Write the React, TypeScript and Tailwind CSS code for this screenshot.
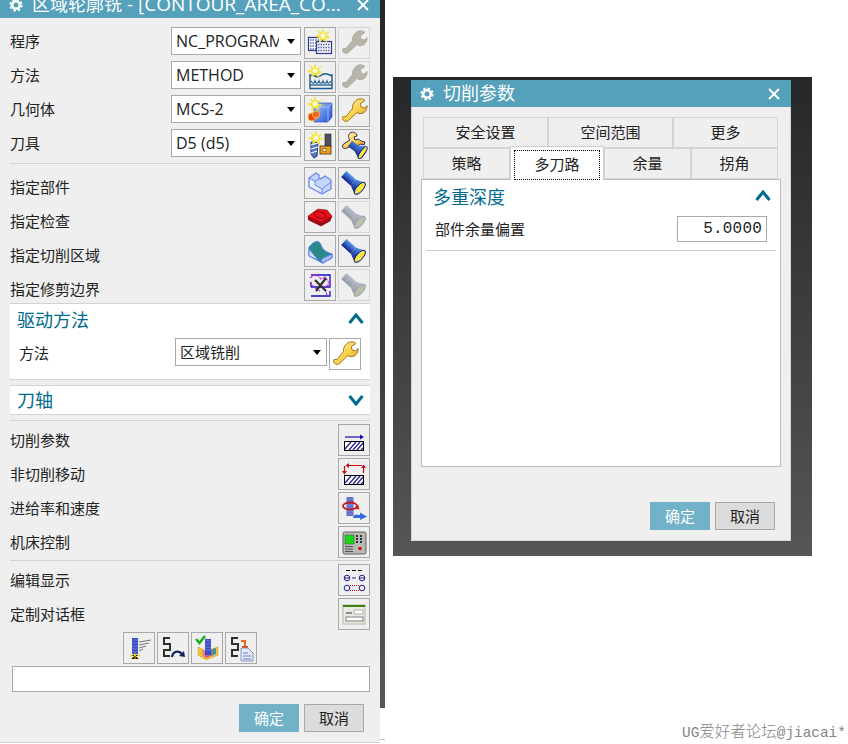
import type { ReactNode } from 'react'

const Grads = () => (
  <svg width="0" height="0" className="absolute">
    <defs>
      <linearGradient id="gold" x1="0" y1="0" x2="1" y2="1">
        <stop offset="0" stopColor="#fff6b0" />
        <stop offset="0.55" stopColor="#fbd04a" />
        <stop offset="1" stopColor="#d4941a" />
      </linearGradient>
      <linearGradient id="torch" x1="0" y1="0" x2="0" y2="1">
        <stop offset="0" stopColor="#5a9cf0" />
        <stop offset="1" stopColor="#0c1f8a" />
      </linearGradient>
      <linearGradient id="torchOff" x1="0" y1="0" x2="0" y2="1">
        <stop offset="0" stopColor="#b8becc" />
        <stop offset="1" stopColor="#959ba9" />
      </linearGradient>
      <linearGradient id="cube" x1="0" y1="0" x2="1" y2="1">
        <stop offset="0" stopColor="#a8c8ff" />
        <stop offset="1" stopColor="#1f50d0" />
      </linearGradient>
      <linearGradient id="rainbow" x1="0" y1="0" x2="1" y2="0">
        <stop offset="0" stopColor="#f0d040" />
        <stop offset="0.4" stopColor="#e0509a" />
        <stop offset="1" stopColor="#20a0a0" />
      </linearGradient>
    </defs>
  </svg>
)

const Ico = ({ children }: { children: ReactNode }) => (
  <svg width="30" height="30" viewBox="0 0 30 30" className="block">{children}</svg>
)

const Spark = ({ x, y }: { x: number; y: number }) => (
  <g transform={`translate(${x} ${y}) scale(1.200)`}>
    <path d="M0-7 1.500-2 6-4 2.500-.5 7 1 2.500 2 4 6 0 3-3.500 6-2.500 2-7 0-2.500-1.500-5-5-1-2.500Z" fill="#f6e23a" />
    <circle r="2" fill="#fffde0" />
  </g>
)

const Wrench = ({ off }: { off?: boolean }) => (
  <Ico>
    <path
      d="M17 4.500C19.500 2 24 2.500 26 4.500L21.500 7.500 22 11 25.500 12 28 9.500C28.500 14 25 18.500 20 17.500L18 16.500 9.500 24.500C7 27 2 24 4 20.500L7 20.500 13.500 12.500C13 9.500 14.500 6.500 17 4.500Z"
      fill={off ? '#b7b4aa' : 'url(#gold)'}
      stroke={off ? '#a9a69c' : '#8a5c08'}
      strokeWidth="0.800"
    />
  </Ico>
)

const Torch = ({ off }: { off?: boolean }) => (
  <Ico>
    <g transform="translate(1 1) rotate(42 15 15)">
      <rect x="0" y="11" width="13" height="8" fill={off ? 'url(#torchOff)' : 'url(#torch)'} />
      <path d="M13 11 21 7.500V22.500L13 19Z" fill={off ? 'url(#torchOff)' : 'url(#torch)'} />
      <ellipse cx="21.500" cy="15" rx="3.200" ry="7.500" fill={off ? '#b9c0a6' : '#f5ea3c'} stroke={off ? '#9aa0ac' : '#10208a'} />
    </g>
  </Ico>
)

const ProgramIco = () => (
  <Ico>
    <rect x="3.500" y="9.500" width="14" height="13" fill="#fff" stroke="#2a3a90" strokeWidth="1.200" />
    <path d="M5 12h11M5 15h11M5 18h11M5 21h11" stroke="#6068a8" strokeWidth="1.500" strokeDasharray="1.500 1" />
    <rect x="11.500" y="13.500" width="15" height="12" fill="#f4f4fa" stroke="#2a3a90" strokeWidth="1.200" />
    <path d="M13 16.500h12M13 19.500h12M13 22.500h12" stroke="#6068a8" strokeWidth="1.500" strokeDasharray="1.500 1" />
    <Spark x={18} y={8} />
  </Ico>
)

const MethodIco = () => (
  <Ico>
    <path d="M5 12V26.500H27V12" fill="none" stroke="#1a5a90" strokeWidth="1.400" />
    <path d="M5 14C9 11 11 17 15 14S21 11 27 14" fill="none" stroke="#1a5a90" strokeWidth="1.500" />
    <path d="M5 23H27" stroke="#1a5a90" strokeWidth="1.300" />
    <path d="M6 19c2 3 3 3 4 0 1 3 3 3 4 0 1 3 3 3 4 0 1 3 3 3 4 0 1 3 2 3 4 0" fill="none" stroke="#1a5a90" strokeWidth="1.200" />
    <Spark x={10} y={9} />
  </Ico>
)

const GeomIco = () => (
  <Ico>
    <path d="M9 11 13 7H27V21L23 26H9Z" fill="url(#cube)" stroke="#2040a0" strokeWidth="0.600" />
    <path d="M9 11H23V26M23 11 27 7" fill="none" stroke="#c0d4ff" strokeWidth="0.700" />
    <circle cx="7" cy="21" r="4" fill="#f04020" stroke="#f8c020" />
    <circle cx="11" cy="18.500" r="3.500" fill="#f06030" stroke="#f8c020" />
    <Spark x={10} y={8} />
  </Ico>
)

const ToolIco = () => (
  <Ico>
    <path d="M6 12H13L12 26 9 28 6 24Z" fill="#5878c8" stroke="#1a2a70" strokeWidth="0.900" />
    <path d="M6 15 13 13M6 19 13 17M6 23 12 21" stroke="#fff" strokeWidth="1.300" />
    <rect x="20" y="4" width="6" height="13" fill="#505058" stroke="#202028" strokeWidth="0.600" />
    <rect x="15" y="16" width="11" height="8" fill="#f0a020" stroke="#3a2a10" strokeWidth="0.800" />
    <rect x="18" y="18.500" width="3" height="3" fill="#fff4d0" stroke="#3a2a10" strokeWidth="0.500" />
    <Spark x={11} y={8} />
  </Ico>
)

const WrenchTorchIco = () => (
  <Ico>
    <path
      d="M11 3C14 1 18 3 18 6L15 7 16 10 19 9C21 10 23 12 26 12L25 15 21 14 18 17 14 15 8 18C3 20 2 15 6 13L11 10C9 8 9 5 11 3Z"
      fill="url(#gold)"
      stroke="#201a60"
      strokeWidth="0.900"
    />
    <g transform="rotate(35 20 20)">
      <path d="M9 16.500H17L24 13V27L17 23.500H9Z" fill="url(#torch)" />
      <ellipse cx="24.500" cy="20" rx="2.200" ry="7" fill="#f5ea3c" stroke="#10208a" />
    </g>
  </Ico>
)

const PartIco = () => (
  <Ico>
    <path
      d="M4 10 11 5 14 7V10L16 11 20 8 26 12V21L17 26 4 19Z"
      fill="#c4d4fa"
      stroke="#6a8cf0"
      strokeWidth="1.300"
      strokeLinejoin="round"
    />
    <path d="M5 11 10 14V18L16 21V24L5 18Z" fill="#eef2ff" />
    <path d="M4 10 10 13V17L17 21V26M17 21 26 14M10 13 16 10" fill="none" stroke="#6a8cf0" />
  </Ico>
)

const CheckIco = () => (
  <Ico>
    <path d="M3 14 13 7 22 8 27 14 25 19 16 24 4 18Z" fill="#e8101c" stroke="#70080c" strokeWidth="0.500" />
    <path d="M3 14V18L16 24 25 19 27 14 16 20Z" fill="#a00812" />
    <ellipse cx="15" cy="13" rx="6" ry="3.200" fill="none" stroke="#80080c" transform="rotate(18 15 13)" />
  </Ico>
)

const AreaIco = () => (
  <Ico>
    <path d="M4 11C10 4 14 4 16 9 18 15 22 16 27 18V22L18 27 4 20Z" fill="#2a8a88" stroke="#5a7cf0" />
    <path d="M4 13 14 25 18 27 4 20Z" fill="#cfdcfa" stroke="#5a7cf0" />
    <path d="M18 22 27 18V22L18 27C16 26 16 23 18 22Z" fill="#a8b8f0" stroke="#5a7cf0" />
  </Ico>
)

const TrimIco = () => (
  <Ico>
    <path d="M6 5H25V17H6M6 12V17M6 26H25V21" fill="none" stroke="#1010c0" strokeWidth="1.300" />
    <path d="M5 8 11 4 16 9 20 7 25 14 19 17 22 25M5 12 10 18 15 21" fill="none" stroke="#d020d8" strokeWidth="1.200" strokeDasharray="3 1" />
    <path d="M10 10 21 21M21 8 11 21" stroke="#303030" strokeWidth="2.200" />
  </Ico>
)

const Hatch = ({ y }: { y: number }) => (
  <g transform={`translate(5 ${y})`}>
    <rect x="0.500" y="0.500" width="19" height="9" fill="#fff" stroke="#000" />
    <path d="M1 8 7 1M5 9 12 1M9 9 16 1M13 9 19 2M17 9 19 7" stroke="#20208a" strokeWidth="1.200" />
  </g>
)

const ParamsIco = () => (
  <Ico>
    <path d="M6 12H22" stroke="#1010b0" strokeWidth="1.200" />
    <path d="M21 9.500 25 12 21 14.500Z" fill="#1010b0" />
    <Hatch y={16} />
  </Ico>
)

const NonCutIco = () => (
  <Ico>
    <path d="M10 6.500H23M5.500 7V12M24.500 14V9" stroke="#c01010" strokeWidth="1.200" />
    <path d="M10 4 6.500 6.500 10 9ZM3 12H8L5.500 15.500ZM22 9H27L24.500 5.500Z" fill="#c01010" />
    <Hatch y={16} />
  </Ico>
)

const FeedIco = () => (
  <Ico>
    <rect x="7.500" y="4" width="7" height="19" rx="1" fill="#5c6cc8" />
    <path d="M8.500 6h5M9.500 9h4M8.500 12h5M9.500 15h4M8.500 18h5M9.500 21h4" stroke="#a0a8e8" strokeDasharray="1 1" />
    <ellipse cx="11" cy="13" rx="7" ry="3.500" fill="none" stroke="#c81818" strokeWidth="1.800" />
    <path d="M19 11.500 15.500 15.500 20.500 16.500Z" fill="#c81818" />
    <path d="M14 24C15 21 18 21 21 22V19.500L28 23.500 21 27V25H17C15 25 14 25 14 24Z" fill="#3a6ae0" />
  </Ico>
)

const MachineIco = () => (
  <Ico>
    <rect x="4" y="5" width="23" height="22" rx="1.500" fill="#b8b8b4" stroke="#606060" />
    <rect x="6" y="8" width="9" height="9" fill="#18d818" stroke="#404040" strokeWidth="0.500" />
    <path d="M17 9h2M21 9h2M17 12h2M21 12h2M17 15h2M21 15h2" stroke="#303030" strokeWidth="2" />
    <path d="M6 19.500h8M6 22h8M6 24.500h8" stroke="#505050" />
    <circle cx="21" cy="21.500" r="1.800" fill="#d01010" />
  </Ico>
)

const EditIco = () => (
  <Ico>
    <path d="M7 5.500h4M13 5.500h4M19 5.500h4" stroke="#000" />
    <circle cx="8" cy="13" r="2.800" fill="none" stroke="#20208a" />
    <circle cx="23" cy="13" r="2.800" fill="none" stroke="#20208a" />
    <path d="M5 13h6M13 13h4M20 13h6" stroke="#20208a" />
    <circle cx="8" cy="23" r="2.800" fill="none" stroke="#20208a" />
    <circle cx="23" cy="23" r="2.800" fill="none" stroke="#20208a" />
    <path d="M11 20.500H20M11 25.500H20" stroke="#d01010" strokeDasharray="1 1" />
  </Ico>
)

const CustomIco = () => (
  <Ico>
    <rect x="4" y="6" width="22" height="19" fill="#e8ece4" stroke="#a8bc98" />
    <rect x="4" y="6" width="22" height="2" fill="#3f7f18" />
    <path d="M7 14H13" stroke="#303030" />
    <rect x="15" y="11" width="9" height="4" fill="#fff" stroke="#808080" strokeWidth="0.600" />
    <rect x="7" y="18" width="17" height="4" fill="#fff" stroke="#606060" strokeWidth="0.800" />
  </Ico>
)

const Steps = () => (
  <path d="M12 5H6V11H12V17H6V23H12" fill="none" stroke="#303030" strokeWidth="2" />
)

const GenIco = () => (
  <Ico>
    <rect x="8" y="5" width="6" height="16" fill="#3a4ac0" />
    <path d="M8.500 7h5M8.500 10h5M8.500 13h5M8.500 16h5M8.500 19h5" stroke="#a0b0f0" strokeDasharray="1 1" />
    <path d="M15 9 27 7M15 12 25 10M15 15 22 13M15 18 19 16" stroke="#777" />
    <path d="M6 23 11 21 16 23M11 21V27M7 26 11 22 15 26" stroke="#f0d830" />
  </Ico>
)

const ReplayIco = () => (
  <Ico>
    <Steps />
    <path d="M14 24C15 18 21 17 24 21" fill="none" stroke="#10205a" strokeWidth="2.200" />
    <path d="M21 23 27 24 26 18Z" fill="#10205a" />
  </Ico>
)

const VerifyIco = () => (
  <Ico>
    <path d="M6 14 14 18 26 14V22L14 27 6 22Z" fill="#f0c830" stroke="#c09010" strokeWidth="0.500" />
    <path d="M8 15 14 18 24 15V21L14 25 8 21Z" fill="url(#rainbow)" />
    <rect x="13" y="6" width="6" height="16" fill="#3a4ac0" />
    <path d="M13.500 8h5M13.500 11h5M13.500 14h5M13.500 17h5" stroke="#a0b0f0" strokeDasharray="1 1" />
    <path d="M4 6 7.500 10 13 3" fill="none" stroke="#18b018" strokeWidth="2.500" />
  </Ico>
)

const ListIco = () => (
  <Ico>
    <Steps />
    <path d="M15 8H19V14" fill="none" stroke="#e86a20" strokeWidth="2" />
    <path d="M15.500 13H22.500L19 18Z" fill="#e84010" />
    <path d="M15 15H22L27 20V28H15Z" fill="#e4e8f8" stroke="#7080b8" strokeWidth="0.800" />
    <path d="M17 20h5M17 23h8M17 26h8" stroke="#7080b8" />
  </Ico>
)

const Gear = () => (
  <svg width="14" height="14" viewBox="0 0 14 14" className="shrink-0">
    <circle cx="7" cy="7" r="3.800" fill="none" stroke="#fff" strokeWidth="2.600" />
    <circle cx="7" cy="7" r="5.700" fill="none" stroke="#fff" strokeWidth="1.800" strokeDasharray="2.400 2.070" />
  </svg>
)

const CloseX = () => (
  <svg width="12" height="12" viewBox="0 0 12 12" className="shrink-0">
    <path d="M1 1 11 11M11 1 1 11" stroke="#fff" strokeWidth="2" />
  </svg>
)

const Chevron = ({ up }: { up?: boolean }) => (
  <svg width="16" height="11" viewBox="0 0 16 11" className={up ? 'block -mt-[3px]' : 'block rotate-180'}>
    <path d="M1.500 10 8 2 14.500 10" fill="none" stroke="#006a8e" strokeWidth="3" />
  </svg>
)

const Btn = ({ children, off }: { children?: ReactNode; off?: boolean }) => (
  <div className={`w-8 h-8 shrink-0 border ${off ? 'border-[#d6d6d6]' : 'border-[#a8a8a8]'}`}>{children}</div>
)

const Select = ({ value, width, size }: { value: string; width: string; size: string }) => (
  <div className={`${width} h-7 shrink-0 border border-[#a8a8a8] bg-white flex items-center pl-[4px] pr-[5px]`}>
    <span className={`flex-1 min-w-0 overflow-hidden whitespace-nowrap text-[#222] ${size}`}>{value}</span>
    <span className="ml-2 w-0 h-0 border-x-[4.500px] border-x-transparent border-t-[5px] border-t-black" />
  </div>
)

const Row = ({ label, low, sel, a, b }: { label: string; low?: boolean; sel?: string; a?: ReactNode; b: ReactNode }) => (
  <div className="flex h-8 items-start gap-[2px]">
    <span className={`flex-1 text-[15px] text-[#222] whitespace-nowrap ${sel ? 'leading-7' : 'leading-8'} ${low ? 'pt-[4px]' : ''}`}>{label}</span>
    {sel && (
      <div className="mr-[1px]">
        <Select value={sel} width="w-[130px]" size="text-[16px]" />
      </div>
    )}
    {a}
    {b}
  </div>
)

const Rule = ({ cls }: { cls: string }) => <div className={`h-px bg-[#d2d2d2] ${cls}`} />

const Title = ({ text, extra }: { text: string; extra?: string }) => (
  <div className="h-[27px] shrink-0 bg-[#55a0bb] flex items-center pl-[9px] pr-[11px] text-white">
    <Gear />
    <span className="ml-[9px] flex-1 whitespace-nowrap text-[18px] leading-[27px]">
      {text}
      {extra && <span className="text-[19px]">{extra}</span>}
    </span>
    <CloseX />
  </div>
)

const OkCancel = () => (
  <div className="flex justify-end gap-[5px]">
    <div className="w-[60px] h-7 bg-[#71b2c8] text-white text-[15px] leading-7 text-center">确定</div>
    <div className="w-[60px] h-7 bg-[#dcdcdc] border border-[#a8a8a8] text-[#222] text-[15px] leading-[26px] text-center">取消</div>
  </div>
)

const Tab = ({ label, width, active }: { label: string; width: string; active?: boolean }) =>
  active ? (
    <div className={`${width} h-[34px] -mt-[2px] -mb-px relative z-10 bg-white border border-b-0 border-[#cfcfcf] p-[3px]`}>
      <div className="h-[30px] border border-dotted border-black text-center text-[15px] leading-[26px] text-[#222]">{label}</div>
    </div>
  ) : (
    <div className={`${width} h-[31px] border border-[#d4d4d4] bg-[#efefef] text-center text-[15px] leading-[29px] text-[#222]`}>{label}</div>
  )

function LeftDialog() {
  return (
    <div className="w-[380px] h-[743px] shrink-0 bg-[#efefef] border-b border-[#d6d6d6] flex flex-col overflow-hidden">
      <div className="-mt-[9px]">
        <Title text="区域轮廓铣" extra=" - [CONTOUR_AREA_CO..." />
      </div>

      <div className="px-[10px] pt-[9px] flex flex-col gap-[2px]">
        <Row label="程序" sel="NC_PROGRAM" a={<Btn><ProgramIco /></Btn>} b={<Btn off><Wrench off /></Btn>} />
        <Row label="方法" sel="METHOD" a={<Btn><MethodIco /></Btn>} b={<Btn off><Wrench off /></Btn>} />
        <Row label="几何体" sel="MCS-2" a={<Btn><GeomIco /></Btn>} b={<Btn><Wrench /></Btn>} />
        <Row label="刀具" sel="D5 (d5)" a={<Btn><ToolIco /></Btn>} b={<Btn><WrenchTorchIco /></Btn>} />
      </div>
      <Rule cls="mx-[10px] mt-[2px] mb-[3px]" />
      <div className="px-[10px] flex flex-col gap-[2px]">
        <Row low label="指定部件" a={<Btn><PartIco /></Btn>} b={<Btn><Torch /></Btn>} />
        <Row low label="指定检查" a={<Btn><CheckIco /></Btn>} b={<Btn off><Torch off /></Btn>} />
        <Row low label="指定切削区域" a={<Btn><AreaIco /></Btn>} b={<Btn><Torch /></Btn>} />
        <Row low label="指定修剪边界" a={<Btn><TrimIco /></Btn>} b={<Btn off><Torch off /></Btn>} />
      </div>

      <div className="mx-[10px] mt-[2px] h-[77px] bg-white border-y border-[#d2d2d2] shrink-0">
        <div className="flex h-[32px] items-center pl-[7px] pr-[6px]">
          <span className="flex-1 text-[18px] text-[#006a8e]">驱动方法</span>
          <Chevron up />
        </div>
        <div className="flex items-start pl-[9px] pr-[9px] mt-[2px] gap-[2px]">
          <span className="flex-1 text-[15px] leading-[30px] text-[#222]">方法</span>
          <Select value="区域铣削" width="w-[152px]" size="text-[15px]" />
          <Btn><Wrench /></Btn>
        </div>
      </div>

      <div className="mx-[10px] mt-[5px] h-[30px] bg-white border-y border-[#d2d2d2] shrink-0 flex items-center pl-[7px] pr-[6px]">
        <span className="flex-1 text-[18px] leading-[30px] text-[#006a8e]">刀轴</span>
        <Chevron />
      </div>
      <Rule cls="mx-[10px] mt-[5px] mb-[3px]" />

      <div className="px-[10px] flex flex-col gap-[2px]">
        <Row label="切削参数" b={<Btn><ParamsIco /></Btn>} />
        <Row label="非切削移动" b={<Btn><NonCutIco /></Btn>} />
        <Row label="进给率和速度" b={<Btn><FeedIco /></Btn>} />
        <Row label="机床控制" b={<Btn><MachineIco /></Btn>} />
      </div>
      <Rule cls="mx-[10px] mt-[2px] mb-[3px]" />
      <div className="px-[10px] flex flex-col gap-[2px]">
        <Row label="编辑显示" b={<Btn><EditIco /></Btn>} />
        <Row label="定制对话框" b={<Btn><CustomIco /></Btn>} />
      </div>

      <div className="flex gap-[2px] pl-[123px] mt-[2px]">
        <Btn><GenIco /></Btn>
        <Btn><ReplayIco /></Btn>
        <Btn><VerifyIco /></Btn>
        <Btn><ListIco /></Btn>
      </div>
      <div className="ml-[12px] mr-[10px] mt-[2px] h-[26px] bg-white border border-[#a8a8a8]" />
      <div className="mt-[12px] pr-[16px]">
        <OkCancel />
      </div>
    </div>
  )
}

function RightDialog() {
  return (
    <div className="ml-2 mt-[77px] w-[419px] h-[479px] shrink-0 bg-gradient-to-b from-[#262728] to-[#555657] pl-[18px] pt-[3px]">
      <div className="w-[380px] h-[461px] bg-[#efefef] border-b border-x border-[#d6d6d6] flex flex-col">
        <div className="-mx-px">
          <Title text="切削参数" />
        </div>
        <div className="pl-[11px] pt-[10px]">
          <div className="flex">
            <Tab label="安全设置" width="w-[125px]" />
            <Tab label="空间范围" width="w-[125px]" />
            <Tab label="更多" width="w-[105px]" />
          </div>
          <div className="flex h-[31px]">
            <Tab label="策略" width="w-[87px]" />
            <Tab active label="多刀路" width="w-[94px]" />
            <Tab label="余量" width="w-[87px]" />
            <Tab label="拐角" width="w-[87px]" />
          </div>
        </div>
        <div className="mx-[9px] w-[360px] h-[288px] bg-white border border-[#bdbdbd] px-[4px]">
          <div className="flex h-[34px] items-center pl-[7px] pr-[5px]">
            <span className="flex-1 text-[18px] text-[#006a8e]">多重深度</span>
            <Chevron up />
          </div>
          <div className="flex items-center h-[26px] mt-[2px] pl-[9px] pr-[9px]">
            <span className="flex-1 text-[15px] text-[#222]">部件余量偏置</span>
            <div className="w-[90px] h-[26px] border border-[#a8a8a8] text-right pr-[4px] text-[16px] leading-6 tracking-[0.2px] text-[#222] [font-family:'Liberation_Mono',monospace]">5.0000</div>
          </div>
          <div className="h-px bg-[#cccccc] mt-[8px]" />
        </div>
        <div className="mt-[35px] pr-[15px]">
          <OkCancel />
        </div>
      </div>
    </div>
  )
}

export default function App() {
  return (
    <div className="relative w-[848px] h-[744px] bg-white overflow-hidden flex items-start [font-family:'Open_Sans','Noto_Sans_CJK_SC',sans-serif]">
      <Grads />
      <LeftDialog />
      <div className="w-[5px] h-[708px] shrink-0 bg-gradient-to-b from-[#262728] to-[#555657]" />
      <RightDialog />
      <div className="absolute left-[380px] top-[739px] w-[5px] h-px bg-[#bbbbbb]" />
      <div className="absolute left-[682px] top-[725px] whitespace-nowrap text-[14.400px] leading-4 text-[#858585] [font-family:'Liberation_Mono','Noto_Sans_CJK_SC',monospace]">
        UG<span className="text-[15.500px] font-light">爱好者论坛</span>@jiacai*
      </div>
    </div>
  )
}
